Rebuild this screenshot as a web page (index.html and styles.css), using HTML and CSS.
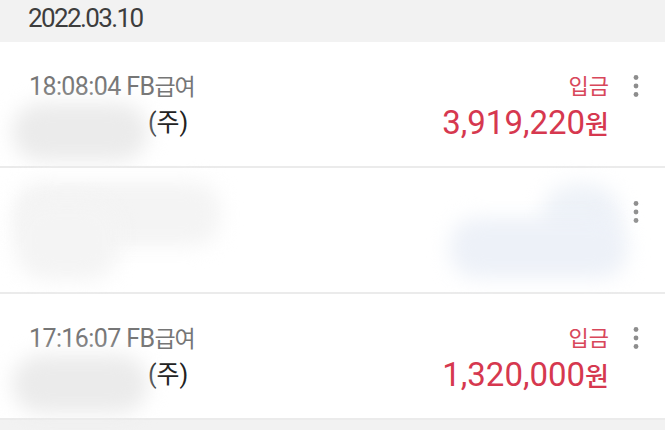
FILE: index.html
```html
<!DOCTYPE html>
<html lang="ko">
<head>
<meta charset="utf-8">
<title>거래내역</title>
<link rel="stylesheet" href="styles.css">
</head>
<body>
<header class="date-bar"><span class="date">2022.03.10</span></header>
<ul class="tx-list">
  <li class="tx">
    <div class="tx-main">
      <div class="tx-meta">18:08:04 FB<span class="ko">급여</span></div>
      <div class="tx-name"><span class="redact"><span class="blob blob-name"></span></span>(주)</div>
    </div>
    <div class="tx-side">
      <div class="tx-type">입금</div>
      <div class="tx-amount">3,919,220<span class="won">원</span></div>
    </div>
    <button class="kebab" aria-label="더보기"><svg width="6" height="22" viewBox="0 0 6 22"><circle cx="3" cy="2.5" r="2.4"/><circle cx="3" cy="11" r="2.4"/><circle cx="3" cy="19.5" r="2.4"/></svg></button>
  </li>
  <li class="tx tx-hidden">
    <span class="blob blob-l1"></span>
    <span class="blob blob-l2"></span>
    <span class="blob blob-r1"></span>
    <span class="blob blob-r2"></span>
    <button class="kebab" aria-label="더보기"><svg width="6" height="22" viewBox="0 0 6 22"><circle cx="3" cy="2.5" r="2.4"/><circle cx="3" cy="11" r="2.4"/><circle cx="3" cy="19.5" r="2.4"/></svg></button>
  </li>
  <li class="tx">
    <div class="tx-main">
      <div class="tx-meta">17:16:07 FB<span class="ko">급여</span></div>
      <div class="tx-name"><span class="redact"><span class="blob blob-name"></span></span>(주)</div>
    </div>
    <div class="tx-side">
      <div class="tx-type">입금</div>
      <div class="tx-amount">1,320,000<span class="won">원</span></div>
    </div>
    <button class="kebab" aria-label="더보기"><svg width="6" height="22" viewBox="0 0 6 22"><circle cx="3" cy="2.5" r="2.4"/><circle cx="3" cy="11" r="2.4"/><circle cx="3" cy="19.5" r="2.4"/></svg></button>
  </li>
</ul>
</body>
</html>
```
FILE: styles.css
```css
* { box-sizing: border-box; }
html, body {
  margin: 0;
  padding: 0;
}
body {
  width: 665px;
  height: 430px;
  overflow: hidden;
  background: #f2f2f2;
  font-family: Roboto, "Noto Sans CJK KR", sans-serif;
}
.date-bar {
  height: 42px;
  padding-left: 28px;
  background: #f2f2f2;
}
.date {
  display: block;
  font-size: 26px;
  line-height: 36px;
  letter-spacing: -1.6px;
  color: #3d3d3d;
}
.tx-list {
  list-style: none;
  margin: 0;
  padding: 0;
}
.tx {
  position: relative;
  display: flex;
  align-items: flex-start;
  height: 126px;
  padding: 29px 17px 0 29px;
  background: #fff;
  border-bottom: 2px solid #ebebeb;
}
.tx-main {
  flex: 1;
  display: flex;
  flex-direction: column;
}
.tx-meta {
  height: 32px;
  font-size: 25px;
  line-height: 32px;
  letter-spacing: -0.6px;
  color: #767676;
  white-space: nowrap;
}
.ko {
  font-size: 23px;
  letter-spacing: -1px;
}
.tx-name {
  display: flex;
  align-items: center;
  height: 40px;
  font-size: 25px;
  line-height: 40px;
  color: #222;
}
.redact {
  position: relative;
  display: inline-block;
  width: 119px;
  height: 40px;
}
.blob {
  position: absolute;
  display: block;
  filter: blur(10px);
}
.blob-name {
  left: -17px;
  top: 0;
  width: 136px;
  height: 58px;
  border-radius: 29px;
  background: #ebebeb;
}
.tx-side {
  display: flex;
  flex-direction: column;
  align-items: flex-end;
}
.tx-type {
  height: 32px;
  font-size: 22px;
  line-height: 32px;
  color: #d8475b;
}
.tx-amount {
  height: 40px;
  font-size: 33px;
  font-weight: 400;
  line-height: 40px;
  color: #d6384f;
  white-space: nowrap;
}
.won {
  font-size: 26px;
  font-weight: 500;
}
.kebab {
  width: 24px;
  height: 32px;
  margin-left: 15px;
  padding: 4px 0 0;
  border: 0;
  background: none;
  display: flex;
  justify-content: center;
  align-items: flex-start;
}
.kebab svg { fill: #8d8d8d; }
.tx-hidden .kebab { margin-left: auto; }
.blob-l1 {
  left: 15px;
  top: 14px;
  width: 205px;
  height: 64px;
  border-radius: 26px;
  background: #f4f4f4;
}
.blob-l2 {
  left: 15px;
  top: 32px;
  width: 104px;
  height: 80px;
  border-radius: 32px;
  background: #f4f4f4;
}
.blob-r1 {
  left: 543px;
  top: 16px;
  width: 77px;
  height: 64px;
  border-radius: 30px;
  background: #eef2f8;
}
.blob-r2 {
  left: 450px;
  top: 50px;
  width: 177px;
  height: 60px;
  border-radius: 26px;
  background: #edf1f8;
}
```
